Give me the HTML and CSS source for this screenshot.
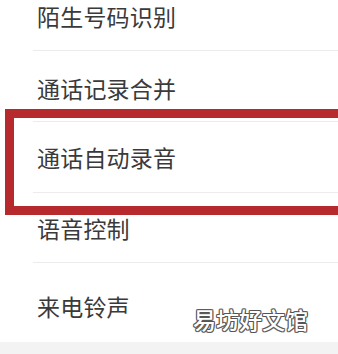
FILE: index.html
```html
<!DOCTYPE html>
<html lang="zh-CN">
<head>
<meta charset="utf-8">
<link rel="stylesheet" href="styles.css">
</head>
<body>
<div class="page">
  <div class="list">
    <div class="row row-first"><span class="label">陌生号码识别</span></div>
    <div class="row row-2"><span class="label">通话记录合并</span></div>
    <div class="row"><span class="label">通话自动录音</span></div>
    <div class="row row-4"><span class="label">语音控制</span></div>
    <div class="row row-last"><span class="label">来电铃声</span></div>
  </div>
  <div class="band"></div>
  <div class="highlight"></div>
  <div class="watermark">易坊好文馆</div>
</div>
</body>
</html>
```

FILE: styles.css
```css
html, body {
  margin: 0;
  padding: 0;
  background: #ffffff;
}
.page {
  position: relative;
  width: 338px;
  height: 354px;
  overflow: hidden;
  background: #ffffff;
  font-family: "Noto Sans CJK SC", "Noto Sans", sans-serif;
}
.list {
  display: flex;
  flex-direction: column;
  margin-top: -17px;
}
.row {
  box-sizing: border-box;
  height: 71px;
  margin-left: 33px;
  padding-left: 4px;
  border-bottom: 1px solid #ececec;
  display: flex;
  align-items: center;
}
.row-first {
  height: 68px;
}
.row-2 {
  padding-top: 5px;
}
.row-4 {
  height: 70px;
  padding-top: 2px;
}
.row-last {
  height: 79px;
  padding-top: 8px;
  border-bottom: none;
}
.label {
  font-size: 23px;
  line-height: 1;
  color: #3a3a3a;
  letter-spacing: 0.2px;
}
.band {
  height: 20px;
  background: #f3f3f3;
}
.highlight {
  position: absolute;
  left: 5px;
  top: 109px;
  width: 360px;
  height: 106px;
  box-sizing: border-box;
  border: 9px solid #b62a2e;
}
.watermark {
  position: absolute;
  left: 193px;
  top: 306px;
  font-size: 23px;
  line-height: 1.2;
  color: #ffffff;
  font-weight: 500;
  text-shadow: 1px 0 #555, -1px 0 #555, 0 1px #555, 0 -1px #555,
    1px 1px #777, -1px -1px #777, 1px -1px #777, -1px 1px #777;
}
```
